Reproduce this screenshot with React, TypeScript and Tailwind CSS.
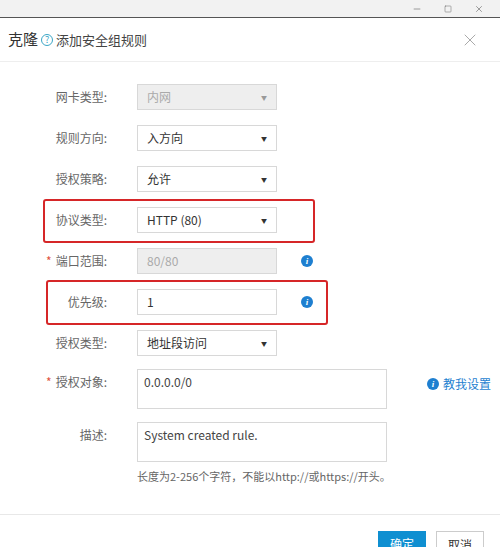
import { X, Minus, Square } from "lucide-react";

const font = { fontFamily: '"Microsoft YaHei", "Noto Sans CJK SC", "Noto Sans", sans-serif' };

function Info() {
  return (
    <span className="flex h-[12px] w-[12px] items-center justify-center rounded-full bg-[#1e7fd0] text-[9px] font-bold italic leading-none text-white" style={{ fontFamily: "Georgia, serif" }}>
      i
    </span>
  );
}

function Label({ text, req, top }: { text: string; req?: boolean; top?: boolean }) {
  return (
    <div className={`flex w-[107px] justify-end gap-[4px] text-[12px] text-[#666] ${top ? "pt-[4px]" : ""}`}>
      {req && <span className="text-[#e0533e]">*</span>}
      <span>{text}:</span>
    </div>
  );
}

function Row({
  label,
  req,
  children,
  extra,
}: {
  label: string;
  req?: boolean;
  children: React.ReactNode;
  extra?: React.ReactNode;
}) {
  return (
    <div className="flex h-[26px] items-center">
      <Label text={label} req={req} />
      <div className="ml-[30px]">{children}</div>
      {extra}
    </div>
  );
}

function Select({ value, disabled }: { value: string; disabled?: boolean }) {
  return (
    <div className={`flex h-[26px] w-[140px] items-center justify-between border border-[#d8d8d8] px-[9px] text-[12px] ${disabled ? "bg-[#eeeeee] text-[#aaa]" : "bg-white text-[#333]"}`}>
      <span>{value}</span>
      <span className={`text-[6px] ${disabled ? "text-[#999]" : "text-[#333]"}`}>▼</span>
    </div>
  );
}

function Input({ value, disabled }: { value: string; disabled?: boolean }) {
  return (
    <div className={`flex h-[26px] w-[140px] items-center border border-[#d8d8d8] px-[9px] text-[12px] ${disabled ? "bg-[#eeeeee] text-[#aaa]" : "bg-white text-[#333]"}`}>
      {value}
    </div>
  );
}

function Area({ value }: { value: string }) {
  return (
    <div className="h-[40px] w-[250px] border border-[#d8d8d8] bg-white px-[6px] pt-[3px] text-[12px] text-[#444]">
      {value}
    </div>
  );
}

export default function App() {
  return (
    <div className="relative h-[547px] w-[500px] overflow-hidden bg-white" style={font}>
      <div className="flex h-[18px] items-center justify-end gap-[22px] border-b border-[#555] bg-[#f2f2f2] pr-[16px] text-[#666]">
        <Minus className="h-[10px] w-[10px]" strokeWidth={1.5} />
        <Square className="h-[8px] w-[8px]" strokeWidth={1.5} />
        <X className="h-[10px] w-[10px]" strokeWidth={1.5} />
      </div>
      <div className="flex h-[44px] items-center justify-between border-b border-[#eee] pl-[8px] pr-[20px]">
        <div className="flex items-center gap-[3px]">
          <span className="text-[15px] text-[#333]">克隆</span>
          <span className="flex h-[12px] w-[12px] items-center justify-center rounded-full border border-[#3ba6c6] text-[9px] leading-none text-[#3ba6c6]">?</span>
          <span className="text-[13px] text-[#444]">添加安全组规则</span>
        </div>
        <X className="h-[20px] w-[20px] text-[#aaa]" strokeWidth={1.2} />
      </div>

      <div className="relative flex flex-col gap-[15px] pt-[22px]">
        <Row label="网卡类型"><Select value="内网" disabled /></Row>
        <Row label="规则方向"><Select value="入方向" /></Row>
        <Row label="授权策略"><Select value="允许" /></Row>
        <Row label="协议类型"><Select value="HTTP (80)" /></Row>
        <Row label="端口范围" req extra={<div className="ml-[24px]"><Info /></div>}><Input value="80/80" disabled /></Row>
        <Row label="优先级" extra={<div className="ml-[24px]"><Info /></div>}><Input value="1" /></Row>
        <Row label="授权类型"><Select value="地址段访问" /></Row>
        <div className="mt-[-2px] flex items-start">
          <Label text="授权对象" req top />
          <div className="ml-[30px]"><Area value="0.0.0.0/0" /></div>
          <div className="ml-[40px] flex items-center gap-[4px] pt-[6px] text-[12px] text-[#1e7fd0]">
            <Info />
            <span>教我设置</span>
          </div>
        </div>
        <div className="mt-[-2px] flex items-start">
          <Label text="描述" top />
          <div className="ml-[30px]">
            <Area value="System created rule." />
            <div className="mt-[6px] text-[11px] text-[#666]">长度为2-256个字符，不能以http://或https://开头。</div>
          </div>
        </div>

        <div className="absolute left-[43px] top-[137px] h-[44px] w-[272px] rounded-[3px] border-[2px] border-[#d62628]" />
        <div className="absolute left-[46px] top-[218px] h-[45px] w-[282px] rounded-[3px] border-[2px] border-[#d62628]" />
      </div>

      <div className="absolute left-0 right-0 top-[514px] border-t border-[#e8e8e8]">
        <div className="flex justify-end gap-[10px] pr-[16px] pt-[16px]">
          <div className="flex h-[30px] w-[48px] items-start justify-center bg-[#0f8fd1] pt-[4px] text-[12px] text-white">确定</div>
          <div className="flex h-[30px] w-[48px] items-start justify-center border border-[#ccc] bg-white pt-[4px] text-[12px] text-[#333]">取消</div>
        </div>
      </div>
    </div>
  );
}
